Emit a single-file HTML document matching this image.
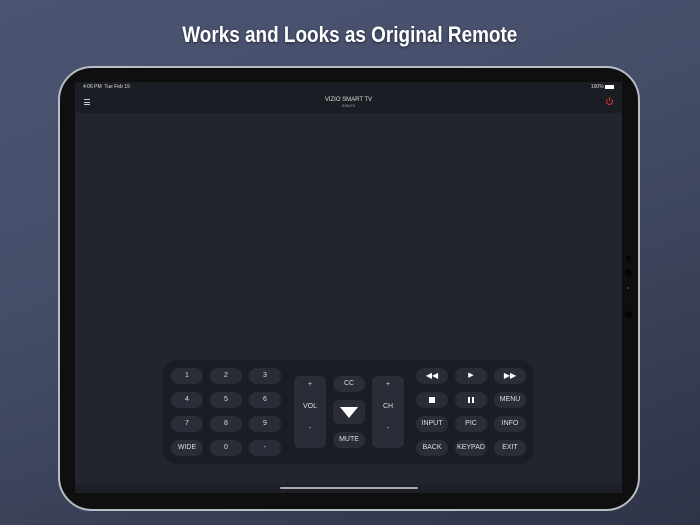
<!DOCTYPE html>
<html><head><style>
*{margin:0;padding:0;box-sizing:border-box}
body{width:700px;height:525px;overflow:hidden;background:linear-gradient(160deg,#4b5472 0%,#454d69 40%,#2f3346 100%);font-family:"Liberation Sans",sans-serif;position:relative}
.title{position:absolute;top:22px;left:0;width:700px;text-align:center;color:#fff;font-weight:bold;font-size:22px;text-shadow:0 1px 3px rgba(0,0,0,.5)}
.title span{display:inline-block;transform:scaleX(.86)}
.dev{position:absolute;left:58px;top:66px;width:582px;height:445px;border-radius:34px;background:#0f0f10;border:2px solid #b8bcc4}
.scr{position:absolute;left:75px;top:82px;width:547px;height:411px;background:#22252e;overflow:hidden}
.sb{position:absolute;left:0;top:0;width:100%;height:11px;background:#1b1d24;color:#ddd;font-size:5px;line-height:11px;padding:0 8px}
.nav{position:absolute;left:0;top:11px;width:100%;height:20px;background:#1b1d24;color:#ddd;text-align:center}
.bot{position:absolute;left:0;bottom:0;width:100%;height:8px;background:#1c1f26}
.home{position:absolute;left:280px;top:487px;width:138px;height:2px;background:#aaa;border-radius:2px}
.pan{position:absolute;left:163px;top:360px;width:371px;height:104px;background:#1b1d24;border-radius:14px}
.b{position:absolute;width:32px;height:16px;border-radius:8px;background:#2a2d37;color:#ddd;font-size:7px;text-align:center;line-height:16px}
.t{position:absolute;background:#2a2d37;border-radius:6px;color:#ddd;font-size:7px;text-align:center}
</style></head><body>
<div class="title"><span>Works and Looks as Original Remote</span></div>
<div class="dev"></div>
<div class="scr">
 <div class="sb"><span>4:06 PM&nbsp;&nbsp;Tue Feb 19</span><span style="float:right">100% <span style="display:inline-block;width:9px;height:4px;background:#fff;vertical-align:middle"></span></span></div>
 <div class="nav"><div style="position:absolute;left:9px;top:6px;width:6px;height:6px;border-top:1px solid #ccc;border-bottom:1px solid #ccc"><div style="margin-top:2px;height:1px;background:#ccc"></div></div>
 <div style="font-size:6px;padding-top:4px">VIZIO SMART TV</div><div style="font-size:4px;color:#aaa">E43-F1</div>
 <div style="position:absolute;right:9px;top:5px;width:7px;height:7px;border:1px solid #d33;border-radius:50%;border-top-color:transparent"></div><div style="position:absolute;right:12px;top:4px;width:1px;height:4px;background:#d33"></div></div>
 <div class="bot"></div>
</div>
<div style="position:absolute;left:626px;top:256px;width:5px;height:5px;border-radius:50%;background:#050505"></div>
<div style="position:absolute;left:625px;top:269px;width:7px;height:7px;border-radius:50%;background:#050505"></div>
<div style="position:absolute;left:627px;top:287px;width:2px;height:2px;border-radius:50%;background:#2a5a80"></div>
<div style="position:absolute;left:625px;top:311px;width:7px;height:7px;border-radius:50%;background:#050505"></div>
<div class="home"></div>
<div class="pan"></div>
<div class="b" style="left:171px;top:368px">1</div><div class="b" style="left:210px;top:368px">2</div><div class="b" style="left:249px;top:368px">3</div>
<div class="b" style="left:171px;top:392px">4</div><div class="b" style="left:210px;top:392px">5</div><div class="b" style="left:249px;top:392px">6</div>
<div class="b" style="left:171px;top:416px">7</div><div class="b" style="left:210px;top:416px">8</div><div class="b" style="left:249px;top:416px">9</div>
<div class="b" style="left:171px;top:440px">WIDE</div><div class="b" style="left:210px;top:440px">0</div><div class="b" style="left:249px;top:440px">-</div>
<div class="t" style="left:294px;top:376px;width:32px;height:72px"><div style="margin-top:5px">+</div><div style="margin-top:15px">VOL</div><div style="margin-top:15px">-</div></div>
<div class="t" style="left:372px;top:376px;width:32px;height:72px"><div style="margin-top:5px">+</div><div style="margin-top:15px">CH</div><div style="margin-top:15px">-</div></div>
<div class="b" style="left:333px;top:376px">CC</div>
<div class="t" style="left:333px;top:400px;width:32px;height:24px"><div style="margin:7px auto 0;width:0;height:0;border-left:9px solid transparent;border-right:9px solid transparent;border-top:11px solid #fff"></div></div>
<div class="b" style="left:333px;top:432px">MUTE</div>
<div class="b" style="left:416px;top:368px;font-size:8px;color:#fff">◀◀</div><div class="b" style="left:455px;top:368px;color:#fff">▶</div><div class="b" style="left:494px;top:368px;font-size:8px;color:#fff">▶▶</div>
<div class="b" style="left:416px;top:392px"><div style="width:6px;height:6px;background:#fff;margin:5px auto 0"></div></div><div class="b" style="left:455px;top:392px"><div style="width:6px;height:6px;margin:5px auto 0;border-left:2px solid #fff;border-right:2px solid #fff"></div></div><div class="b" style="left:494px;top:392px">MENU</div>
<div class="b" style="left:416px;top:416px">INPUT</div><div class="b" style="left:455px;top:416px">PIC</div><div class="b" style="left:494px;top:416px">INFO</div>
<div class="b" style="left:416px;top:440px">BACK</div><div class="b" style="left:455px;top:440px">KEYPAD</div><div class="b" style="left:494px;top:440px">EXIT</div>
</body></html>
